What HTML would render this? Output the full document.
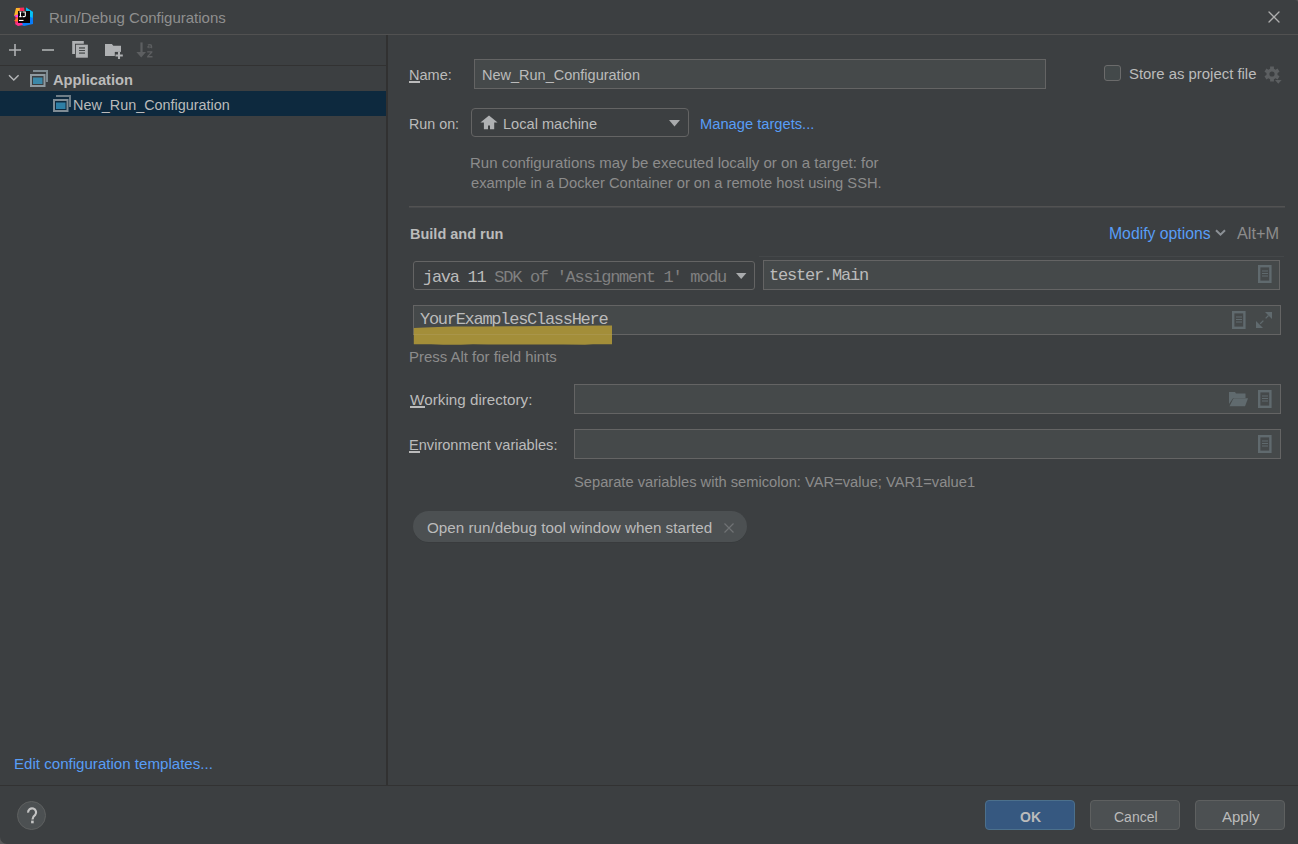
<!DOCTYPE html>
<html><head><meta charset="utf-8">
<style>
html,body{margin:0;padding:0;}
body{width:1298px;height:844px;background:#3c3f41;position:relative;overflow:hidden;font-family:"Liberation Sans",sans-serif;color:#bbbbbb;}
.a{position:absolute;}
.t{position:absolute;white-space:nowrap;font-size:14.5px;line-height:15px;height:15px;}
.m{position:absolute;white-space:nowrap;font-family:"Liberation Mono",monospace;font-size:17px;letter-spacing:-1.2px;line-height:15px;height:15px;}
.b{font-weight:bold;}
.g{color:#8c8c8c;}
.l{color:#589df6;}
.fld{position:absolute;background:#45494a;border:1px solid #646464;box-sizing:border-box;}
.cmb{position:absolute;background:#3c3f41;border:1px solid #646464;border-radius:3px;box-sizing:border-box;}
.btn{position:absolute;background:#4c5052;border:1px solid #5e6060;border-radius:4px;box-sizing:border-box;width:90px;height:30px;top:800px;}
u{text-decoration:none;position:relative;}
u:after{content:"";position:absolute;left:0;right:-1px;bottom:0px;height:2px;background:#bbbbbb;}
svg{position:absolute;overflow:visible;}
</style></head><body>
<!-- title bar -->
<div class="a" style="left:0;top:34px;width:1298px;height:1px;background:#515151"></div>
<!-- left divider -->
<div class="a" style="left:386px;top:35px;width:2px;height:750px;background:#313131"></div>
<!-- toolbar separator -->
<div class="a" style="left:0;top:65px;width:386px;height:1px;background:#323232"></div>
<!-- tree selection -->
<div class="a" style="left:0;top:91px;width:386px;height:25px;background:#0d293e"></div>
<!-- footer separator -->
<div class="a" style="left:0;top:785px;width:1298px;height:1px;background:#323232"></div>
<!-- build and run separator -->
<div class="a" style="left:409px;top:206px;width:876px;height:1px;background:#525252"></div><div class="a" style="left:409px;top:207px;width:876px;height:1px;background:#47494b"></div>
<div class="a" style="left:759px;top:256px;width:525px;height:1px;background:#444749"></div>

<!-- fields -->
<div class="fld" style="left:474px;top:59px;width:572px;height:30px"></div>
<div class="cmb" style="left:471px;top:108px;width:218px;height:29px;border-radius:4px"></div>
<div class="cmb" style="left:413px;top:261px;width:342px;height:29px"></div>
<div class="fld" style="left:763px;top:260px;width:517px;height:30px"></div>
<div class="fld" style="left:413px;top:305px;width:868px;height:30px"></div>
<div class="fld" style="left:574px;top:384px;width:707px;height:30px"></div>
<div class="fld" style="left:574px;top:429px;width:707px;height:30px"></div>

<!-- checkbox -->
<div class="a" style="left:1104px;top:65px;width:17px;height:16px;box-sizing:border-box;border:1px solid #6b6b6b;border-radius:3px;background:#43494a"></div>

<!-- chip -->
<div class="a" style="left:413px;top:511px;width:334px;height:31px;border-radius:15.5px;background:#4c5052;box-shadow:0 0.5px 0 #36393b"></div>

<!-- buttons -->
<div class="btn" style="left:985px;background:#365880;border-color:#4c708c"></div>
<div class="btn" style="left:1090px"></div>
<div class="btn" style="left:1195px"></div>

<!-- help -->
<div class="a" style="left:17px;top:801px;width:29px;height:29px;box-sizing:border-box;border-radius:50%;background:#4c5052;border:1px solid #5e6060"></div>

<!-- texts -->
<div class="t" style="left:49px;top:10px;font-size:15px;color:#8f8f8f">Run/Debug Configurations</div>
<div class="t b" style="left:53px;top:73px;font-size:14.7px">Application</div>
<div class="t" style="left:73px;top:98px;font-size:14.4px">New_Run_Configuration</div>
<div class="t" style="left:409px;top:68px"><u>N</u>ame:</div>
<div class="t" style="left:482px;top:68px">New_Run_Configuration</div>
<div class="t" style="left:1129px;top:67px;font-size:14.9px">Store as project file</div>
<div class="t" style="left:409px;top:117px;font-size:14.3px">Run on:</div>
<div class="t" style="left:503px;top:117px;font-size:14.6px">Local machine</div>
<div class="t l" style="left:700px;top:117px;font-size:14.7px">Manage targets...</div>
<div class="t g" style="left:470px;top:155px;font-size:15px">Run configurations may be executed locally or on a target: for</div>
<div class="t g" style="left:471px;top:176px;font-size:14.7px">example in a Docker Container or on a remote host using SSH.</div>
<div class="t b" style="left:410px;top:227px">Build and run</div>
<div class="t l" style="left:1109px;top:226px;font-size:15.75px">Modify options</div>
<div class="t g" style="left:1237px;top:226px;font-size:16.3px">Alt+M</div>
<div class="m" style="left:423px;top:270px;letter-spacing:-1.29px">java 11<span style="color:#808080"> SDK of 'Assignment 1' modu</span></div>
<div class="m" style="left:769px;top:268px">tester.Main</div>
<div class="m" style="left:420px;top:312px;letter-spacing:-1.28px">YourExamplesClassHere</div>
<div class="t g" style="left:409px;top:349px;font-size:14.95px">Press Alt for field hints</div>
<div class="t" style="left:410px;top:392px;font-size:15.2px"><u>W</u>orking directory:</div>
<div class="t" style="left:409px;top:438px;font-size:14.6px"><u>E</u>nvironment variables:</div>
<div class="t g" style="left:574px;top:475px;font-size:14.7px">Separate variables with semicolon: VAR=value; VAR1=value1</div>
<div class="t" style="left:427px;top:520px;font-size:15.23px">Open run/debug tool window when started</div>
<div class="t l" style="left:14px;top:756px;font-size:15.1px">Edit configuration templates...</div>
<div class="t b" style="left:1020px;top:810px;font-size:14px">OK</div>
<div class="t" style="left:1114px;top:810px;font-size:14px">Cancel</div>
<div class="t" style="left:1222px;top:809px;font-size:15px">Apply</div>


<!-- ICONS -->
<!-- IJ logo -->
<svg style="left:14px;top:7px" width="20" height="19" viewBox="0 0 20 19">
 <polygon points="2,1 10,0.5 11,9 1,17" fill="#fe2857"/>
 <polygon points="2,1 6,1 5,7 0,9" fill="#fcb52c"/>
 <polygon points="0,9 5,7 5,11" fill="#ff45ed"/>
 <polygon points="0,14 5,9 6,15" fill="#fe7c28"/>
 <polygon points="12,0.5 19,5 19,17 10,19 4,17 12,9" fill="#087cfa"/>
 <polygon points="12,0.5 19,5 18.5,11 13,8" fill="#07c3f2"/>
 <polygon points="1,17 6,12 9,18 4,19" fill="#ff318c"/>
 <rect x="4" y="4" width="12" height="12" fill="#0a0405"/>
 <path d="M5.3 5H7.6M5.3 9.6H7.6M6.45 5V9.6" stroke="#fff" stroke-width="1.1" fill="none"/>
 <path d="M8.6 5H11.3V8.7Q11.3 9.6 10.2 9.6H8.6" stroke="#fff" stroke-width="1.1" fill="none"/>
 <rect x="5" y="12.9" width="4.5" height="1.1" fill="#fff"/>
</svg>
<!-- close -->
<svg style="left:1267px;top:10px" width="14" height="14" viewBox="0 0 14 14"><path d="M2 2L12 12M12 2L2 12" stroke="#aeaeae" stroke-width="1.3" stroke-linecap="round"/></svg>
<!-- toolbar plus -->
<svg style="left:9px;top:44px" width="12" height="12" viewBox="0 0 12 12"><path d="M6 0V12M0 6H12" stroke="#afb1b3" stroke-width="1.6"/></svg>
<!-- minus -->
<svg style="left:42px;top:44px" width="12" height="12" viewBox="0 0 12 12"><path d="M0 6H12" stroke="#afb1b3" stroke-width="1.6"/></svg>
<!-- copy -->
<svg style="left:72px;top:41px" width="17" height="17" viewBox="0 0 17 17">
 <path d="M0.2 0H11.8V2.7H3V13H0.2Z" fill="#afb1b3"/>
 <rect x="3.35" y="3.2" width="13" height="14" fill="#3c3f41"/>
 <rect x="3.85" y="3.7" width="12" height="13" fill="#afb1b3"/>
 <rect x="7" y="6.2" width="6" height="1.5" fill="#555859"/>
 <rect x="7" y="9.1" width="6" height="0.9" fill="#3c3f41"/>
 <rect x="7" y="11.4" width="6" height="1.4" fill="#555859"/>
</svg>
<!-- folder plus -->
<svg style="left:105px;top:43px" width="19" height="17" viewBox="0 0 19 17">
 <path d="M0 0.9H6.9L8.3 2.7H16V13H0Z" fill="#afb1b3"/>
 <path d="M9.8 8.9H19V17H9.8Z" fill="#3c3f41"/>
 <path d="M14 9V15.9M10.5 12.5H17.8" stroke="#afb1b3" stroke-width="2.1"/>
</svg>
<!-- sort -->
<svg style="left:135px;top:41px" width="20" height="18" viewBox="0 0 20 18">
 <path d="M6.5 1.4V12" stroke="#5d5f61" stroke-width="2.2"/>
 <path d="M1.4 10.9H11L6.2 16.4Z" fill="#5d5f61"/>
 <path d="M12.6 3.6Q13.4 3 14.8 3Q17.2 3 17.2 5V7.2H16.2L16 6.6Q15.3 7.3 14.2 7.3Q12.3 7.3 12.3 5.9Q12.3 4.5 15.9 4.5Q15.8 3.9 14.8 3.9Q13.8 3.9 13.1 4.4Z M15.9 5.3Q13.5 5.3 13.5 5.9Q13.5 6.4 14.3 6.4Q15.9 6.4 15.9 5.3Z" fill="#5d5f61"/>
 <path d="M12.2 10.2H17.4V11.4L14 15.1H17.5V16.4H12.1V15.2L15.5 11.5H12.2Z" fill="#5d5f61"/>
</svg>
<!-- tree chevron -->
<svg style="left:8px;top:74px" width="12" height="8" viewBox="0 0 12 8"><path d="M1 1.2L5.8 6L10.6 1.2" fill="none" stroke="#b4b6b8" stroke-width="1.4"/></svg>
<!-- app icon 1 -->
<svg style="left:30px;top:70px" width="19" height="17" viewBox="0 0 19 17">
 <path d="M3 1H17V12" fill="none" stroke="#7f8b91" stroke-width="2"/>
 <rect x="1" y="5" width="13.5" height="11" fill="#3c3f41" stroke="#8f9aa0" stroke-width="2"/>
 <rect x="3" y="7.5" width="9.5" height="6.5" fill="#3b88a8"/>
</svg>
<!-- app icon 2 -->
<svg style="left:53px;top:95px" width="19" height="17" viewBox="0 0 19 17">
 <path d="M3 1H17V12" fill="none" stroke="#6f7d86" stroke-width="2"/>
 <rect x="1" y="5" width="13.5" height="11" fill="#0d293e" stroke="#7f8c95" stroke-width="2"/>
 <rect x="3" y="7.5" width="9.5" height="6.5" fill="#2e7fa6"/>
</svg>
<!-- house -->
<svg style="left:480px;top:115px" width="18" height="15" viewBox="0 0 18 15">
 <path d="M9 0.6L17.6 7.5H14.2V14.2H10V10.4H8V14.2H3.9V7.5H0.4Z" fill="#afb1b3"/>
</svg>
<!-- combo arrows -->
<svg style="left:669px;top:120px" width="12" height="7" viewBox="0 0 12 7"><path d="M0 0H11L5.5 6.4Z" fill="#a9abad"/></svg>
<svg style="left:736px;top:273px" width="11" height="7" viewBox="0 0 11 7"><path d="M0 0H10.4L5.2 6Z" fill="#a9abad"/></svg>
<!-- gear -->
<svg style="left:1264px;top:66px" width="18" height="18" viewBox="0 0 18 18">
 <path d="M6.08 2.74 L6.11 0.43 L9.89 0.43 L9.92 2.74 L11.60 3.71 L13.61 2.58 L15.50 5.85 L13.51 7.03 L13.51 8.97 L15.50 10.15 L13.61 13.42 L11.60 12.29 L9.92 13.26 L9.89 15.57 L6.11 15.57 L6.08 13.26 L4.40 12.29 L2.39 13.42 L0.50 10.15 L2.49 8.97 L2.49 7.03 L0.50 5.85 L2.39 2.58 L4.40 3.71 Z M8 5.4A2.6 2.6 0 1 0 8 10.6A2.6 2.6 0 1 0 8 5.4Z" fill="#5c5f61" fill-rule="evenodd"/>
 <path d="M11 14H17.6L14.3 17.8Z" fill="#5c5f61"/>
</svg>
<!-- modify options chevron -->
<svg style="left:1215px;top:229px" width="12" height="8" viewBox="0 0 12 8"><path d="M1 1.2L5.5 5.7L10 1.2" fill="none" stroke="#8c9196" stroke-width="2"/></svg>
<!-- doc icons -->
<svg style="left:1258px;top:265px" width="14" height="18" viewBox="0 0 14 18"><rect x="1.2" y="1.2" width="11.2" height="15.6" fill="none" stroke="#606a6e" stroke-width="2.4"/><path d="M4 6H10M4 8.5H10M4 11H10" stroke="#606a6e" stroke-width="1"/></svg>
<svg style="left:1232px;top:311px" width="14" height="18" viewBox="0 0 14 18"><rect x="1.2" y="1.2" width="11.2" height="15.6" fill="none" stroke="#606a6e" stroke-width="2.4"/><path d="M4 6H10M4 8.5H10M4 11H10" stroke="#606a6e" stroke-width="1"/></svg>
<svg style="left:1258px;top:390px" width="14" height="18" viewBox="0 0 14 18"><rect x="1.2" y="1.2" width="11.2" height="15.6" fill="none" stroke="#606a6e" stroke-width="2.4"/><path d="M4 6H10M4 8.5H10M4 11H10" stroke="#606a6e" stroke-width="1"/></svg>
<svg style="left:1258px;top:435px" width="14" height="18" viewBox="0 0 14 18"><rect x="1.2" y="1.2" width="11.2" height="15.6" fill="none" stroke="#606a6e" stroke-width="2.4"/><path d="M4 6H10M4 8.5H10M4 11H10" stroke="#606a6e" stroke-width="1"/></svg>
<!-- expand -->
<svg style="left:1256px;top:312px" width="16" height="16" viewBox="0 0 16 16">
 <path d="M9 0H16V7Z" fill="#606a6e"/><path d="M0 9V16H7Z" fill="#606a6e"/>
 <path d="M3.5 12.5L12.5 3.5" stroke="#606a6e" stroke-width="1.3" stroke-dasharray="4.5 3.2" stroke-dashoffset="-1"/>
</svg>
<!-- folder open -->
<svg style="left:1229px;top:392px" width="19" height="15" viewBox="0 0 19 15">
 <path d="M0 0H6L7 1.4H16.5V6H4.2L0 12Z" fill="#606a6e"/>
 <path d="M4.5 6.2H19L16 14.2H0.5Z" fill="#606a6e"/>
</svg>
<!-- chip x -->
<svg style="left:724px;top:523px" width="10" height="10" viewBox="0 0 10 10"><path d="M0.5 0.5L9.5 9.5M9.5 0.5L0.5 9.5" stroke="#6f7274" stroke-width="1.2"/></svg>
<!-- help ? -->
<svg style="left:26px;top:808px" width="12" height="17" viewBox="0 0 12 17"><path d="M2.1 4.6A4.0 4.0 0 1 1 9.2 6.9Q6.5 8.8 6.5 11.4" fill="none" stroke="#c4c4c4" stroke-width="2.2"/><rect x="5.1" y="12.6" width="2.6" height="2.7" fill="#c4c4c4"/></svg>

<!-- highlight marker -->
<svg style="left:413px;top:325px" width="200" height="21" viewBox="0 0 200 21">
 <path d="M0.8 2.9L12 2.6L25 1.9L40 1.6L70 1.6L110 1.2L150 0.8L199 0.6L199 19.3L180 19.3L172 19.7L150 19.5L100 19.5L75 19.4L60 19.3L48 19.8L30 19.7L18 19.3L0.8 19.3Z" fill="#a38e39"/>
 <path d="M0.8 9.5H199" stroke="#a9954a" stroke-width="1"/>
</svg>
<!-- window corners -->
<svg style="left:0;top:835px" width="9" height="9" viewBox="0 0 9 9"><path d="M0 2A7 7 0 0 0 7 9H0Z" fill="#58595a"/></svg>
<svg style="left:1294px;top:0" width="4" height="4" viewBox="0 0 4 4"><path d="M0 0H4V3A3 3 0 0 0 1 0Z" fill="#555657"/></svg>
</body></html>
